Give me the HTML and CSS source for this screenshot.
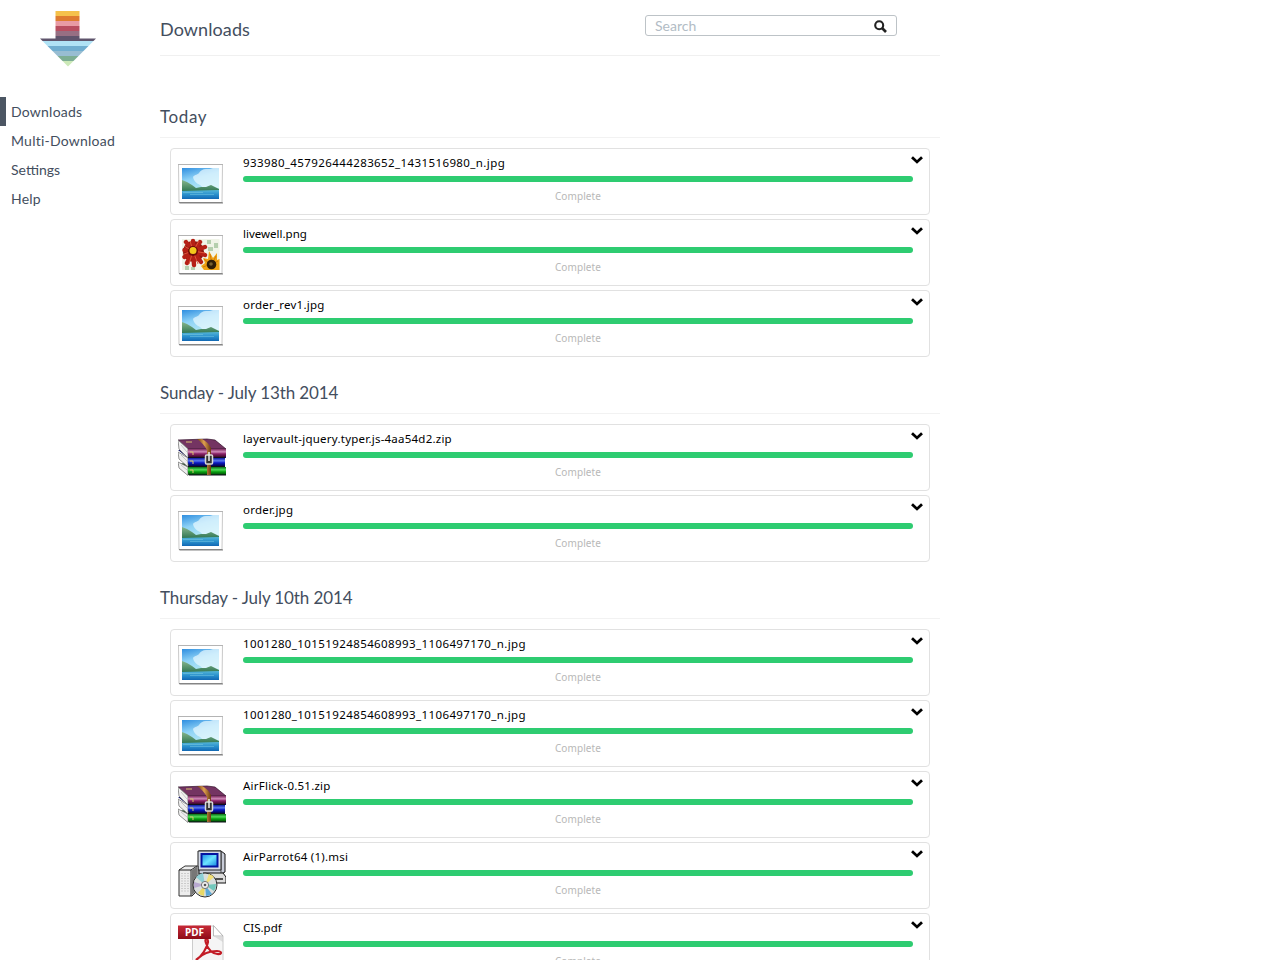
FILE: index.html
```
<!DOCTYPE html>
<html lang="en">
<head>
<meta charset="utf-8">
<title>Downloads</title>
<link rel="stylesheet" href="styles.css">
</head>
<body>
<svg class="sprites" aria-hidden="true">
  <defs>
    <linearGradient id="sky" x2=".3" y2="1"><stop offset="0" stop-color="#2f8ee0"/><stop offset=".4" stop-color="#8fd3f6"/><stop offset="1" stop-color="#c8f4f4"/></linearGradient>
    <linearGradient id="sea" x2="0" y2="1"><stop offset="0" stop-color="#55b6d8"/><stop offset=".5" stop-color="#2a90cc"/><stop offset="1" stop-color="#1268b4"/></linearGradient>
    <linearGradient id="hill" x2="0" y2="1"><stop offset="0" stop-color="#86b58c"/><stop offset="1" stop-color="#2b7350"/></linearGradient>
    <linearGradient id="plum" x2="0" y2="1"><stop offset="0" stop-color="#7d2b60"/><stop offset=".35" stop-color="#d08ab8"/><stop offset=".6" stop-color="#8b2067"/><stop offset="1" stop-color="#3c0a2a"/></linearGradient>
    <linearGradient id="blue" x2="0" y2="1"><stop offset="0" stop-color="#1018a0"/><stop offset=".35" stop-color="#5a7cf0"/><stop offset=".6" stop-color="#0a18c4"/><stop offset="1" stop-color="#04064c"/></linearGradient>
    <linearGradient id="green" x2="0" y2="1"><stop offset="0" stop-color="#087018"/><stop offset=".35" stop-color="#50dc58"/><stop offset=".6" stop-color="#08a010"/><stop offset="1" stop-color="#044008"/></linearGradient>
    <linearGradient id="strap" x2="1" y2="0"><stop offset="0" stop-color="#6b3a10"/><stop offset=".5" stop-color="#e0a050"/><stop offset="1" stop-color="#6b3a10"/></linearGradient>
    <linearGradient id="red" x2="0" y2="1"><stop offset="0" stop-color="#c82a38"/><stop offset="1" stop-color="#8e0c18"/></linearGradient>
    <linearGradient id="screen" x2="1" y2="1"><stop offset="0" stop-color="#1684e4"/><stop offset=".5" stop-color="#6ce4ff"/><stop offset="1" stop-color="#1080e0"/></linearGradient>
  </defs>
  <symbol id="frame" viewBox="0 0 48 48">
    <path d="M1.500 46h43.500v2H1.500z" fill="#9a9a9a" opacity=".6"/>
    <path d="M.5 8.500h44l-.5 38H1z" fill="#fff" stroke="#c9c9c9"/>
    <path d="M0 8.500h45" stroke="#b4b4b4"/>
    <path d="M1 46.500h43.500" stroke="#858585"/>
  </symbol>
  <symbol id="photo" viewBox="0 0 48 48">
    <use href="#frame"/>
    <path d="M4 12h37v31H4z" fill="url(#sky)"/>
    <path d="M15 21c2-3 5-2 6-4s4-4 7-4 5 0 7-1h6v20H25c-2-4-9-4-10-11z" fill="#eafaff" opacity=".7"/>
    <path d="M4 24l5 2 5 3 4 3 5-1 5 0 5-2 8 4v3H4z" fill="url(#hill)"/>
    <path d="M4 35l37-1v9H4z" fill="url(#sea)"/>
    <path d="M5 36.500h20M12 38.500h24" stroke="#8ad4e8" stroke-width=".7" opacity=".6"/>
  </symbol>
  <symbol id="flower" viewBox="0 0 48 48">
    <use href="#frame"/>
    <path d="M4 12h37.500v31H4z" fill="#f0f4e8"/>
    <path d="M29 13h4v4h-4zM36 16h4v5h-4zM30 20h5v4h-5zM7 39h4v4H7zM13 40h4v3h-4z" fill="#b5cfae"/>
    <circle cx="15.500" cy="24.500" r="10.500" fill="#8e1812"/>
    <path d="M15 24L8 15M15 24L15 14M15 24L22 15M15 24L27 20M15 24L27 28M15 24L23 35M15 24L16 38M15 24L9 36M15 24L6.500 30M15 24L6.500 23" stroke="#b52016" stroke-width="4.400" stroke-linecap="round"/>
    <path d="M15 24L12 14M15 24L21 14M15 24L27 26M15 24L20 37M15 24L11 37M15 24L6 27M15 24L6 19" stroke="#e25c40" stroke-width=".9"/>
    <circle cx="15" cy="24" r="5" fill="#6e0b08"/><circle cx="15" cy="23.500" r="3.500" fill="#f2c91c"/>
    <path d="M25 31l5 1 1-8 4 7 4-5v7l2.500-1v11H26l-3-4 4-3z" fill="#f0a414"/>
    <path d="M26 32l6 5M32 27l2 10M38 29l-4 8M25 40l8-3M40 34l-6 3" stroke="#d27c08"/>
    <circle cx="33.500" cy="37.500" r="4.800" fill="#2e1c06"/><circle cx="33" cy="37" r="1.800" fill="#766030"/>
  </symbol>
  <symbol id="archive" viewBox="0 0 48 48">
    <path d="M0 32l10 11h37v-8L38 27z" fill="#06340a"/>
    <path d="M0 30l10 5v8.500L1 36z" fill="#eee" stroke="#777" stroke-width=".8"/>
    <path d="M10 35h38v8H11q-2-4-1-8z" fill="url(#green)"/>
    <path d="M0 18l10 8h38v-2L38 16z" fill="#080c60"/>
    <path d="M0 20l10 6v9L1 27z" fill="#eee" stroke="#777" stroke-width=".8"/>
    <path d="M10 26h37v8H11q-2-4-1-8z" fill="url(#blue)"/>
    <path d="M0 8l29-1 8 1 11 9H10z" fill="#743462" stroke="#32102a" stroke-width=".7"/>
    <path d="M0 8l10 9v9L1 17z" fill="#f2f2f2" stroke="#777" stroke-width=".8"/>
    <path d="M10 17h38v8H11q-2-4-1-8z" fill="url(#plum)"/>
    <path d="M3 13l6 7M3 23l6 6M3 33l6 5" stroke="#bbb" stroke-width=".8"/>
    <path d="M10 25.500h37M10 34.500h37M11 43h37" stroke="#10101c"/>
    <path d="M12 20h3v3M12 29h3v3M12 38h3v3M8 10h6" stroke="#d9c26c" fill="none"/>
    <path d="M19 7h5q6 3 9 9v27h-4V18q-4-7-10-11z" fill="url(#strap)"/>
    <rect x="27.500" y="23" width="7" height="9" rx="1" fill="#333" stroke="#d9d9d9" stroke-width="1.500"/>
    <path d="M31 20v9" stroke="#eee" stroke-width="1.500"/>
  </symbol>
  <symbol id="installer" viewBox="0 0 48 48">
    <path d="M21 1h22l4 3v18l-4 2H21z" fill="#c8ccd8" stroke="#111"/>
    <path d="M43 1v22" stroke="#555"/>
    <path d="M20 1h23v19H20z" fill="#d6dce8" stroke="#222"/>
    <path d="M23.500 4h16v12.500h-16z" fill="url(#screen)" stroke="#0414a0" stroke-width="2"/>
    <path d="M25 23h20l3 4v6H30z" fill="#ddd" stroke="#111"/>
    <path d="M36 29h9" stroke="#222" stroke-width="1.500"/>
    <path d="M1 20l6-4h13v24l-6 6H1z" fill="#ededed" stroke="#333"/>
    <path d="M1 20h12v26M13 20l6-4" fill="none" stroke="#222"/>
    <path d="M13.500 20.500l5.500-4v24l-5.500 5z" fill="#777"/>
    <path d="M4 23v20M7 23v20M10 23v20" stroke="#aaa" stroke-dasharray="1 1.500"/>
    <circle cx="27" cy="35" r="12" fill="#d9dedd" stroke="#333"/>
    <path d="M27 35L18 27a12 12 0 0 1 7-4z" fill="#8fd0d6"/>
    <path d="M27 35L31 24a12 12 0 0 1 5 3z" fill="#f2e078"/>
    <path d="M27 35L38 34a12 12 0 0 1-2 7z" fill="#72c8bc"/>
    <path d="M27 35L26 46a12 12 0 0 1-6-3z" fill="#e8d866"/>
    <path d="M27 35L34 44a12 12 0 0 1-6 2z" fill="#5ba8d8"/>
    <path d="M27 35L16 38v-6z" fill="#b8a9d0"/>
    <circle cx="27" cy="35" r="3.600" fill="#eee" stroke="#777"/><circle cx="27" cy="35" r="1.300" fill="#555"/>
  </symbol>
  <symbol id="chevron" viewBox="0 0 14 10">
    <path d="M2 2.200l5 4.700 5-4.700" fill="none" stroke="#000" stroke-width="2.800"/>
  </symbol>
</svg>

<aside class="sidebar">
  <svg class="logo" viewBox="0 0 56 56">
    <defs><clipPath id="arrow"><path d="M15.500 0h24v27.500H56L28 55.500 0 27.500h15.500z"/></clipPath></defs>
    <g clip-path="url(#arrow)">
      <path fill="#f5c14b" d="M0 0h56v5H0z"/><path fill="#de7b2f" d="M0 5h56v5H0z"/>
      <path fill="#e89ba4" d="M0 10h56v5H0z"/><path fill="#b94e60" d="M0 15h56v5H0z"/>
      <path fill="#976f83" d="M0 20h56v5H0z"/><path fill="#5f546c" d="M0 25h56v5H0z"/>
      <path fill="#b0e2f5" d="M0 30h56v5H0z"/><path fill="#70aed0" d="M0 35h56v5H0z"/>
      <path fill="#98bdd2" d="M0 40h56v5H0z"/><path fill="#7dae94" d="M0 45h56v5H0z"/>
      <path fill="#cce9b8" d="M0 50h56v6H0z"/>
    </g>
  </svg>
  <nav class="nav">
    <a class="nav-item active">Downloads</a>
    <a class="nav-item">Multi-Download</a>
    <a class="nav-item compact">Settings</a>
    <a class="nav-item">Help</a>
  </nav>
</aside>

<main class="content">
  <header class="header">
    <h1 class="title">Downloads</h1>
    <div class="search">
      <span>Search</span>
      <svg class="search-icon" viewBox="0 0 13 13"><circle cx="5.200" cy="5.200" r="4" fill="none" stroke="#222" stroke-width="2.100"/><path d="M8 8l4 4" stroke="#222" stroke-width="2.600"/></svg>
    </div>
  </header>

  <section class="group">
    <h2 class="day day-short">Today</h2>
    <article class="card">
      <svg class="icon"><use href="#photo"/></svg>
      <div class="info"><div class="name numeric">933980_457926444283652_1431516980_n.jpg</div><div class="bar"></div><div class="status">Complete</div></div>
      <svg class="chevron"><use href="#chevron"/></svg>
    </article>
    <article class="card">
      <svg class="icon"><use href="#flower"/></svg>
      <div class="info"><div class="name compact">livewell.png</div><div class="bar"></div><div class="status">Complete</div></div>
      <svg class="chevron"><use href="#chevron"/></svg>
    </article>
    <article class="card">
      <svg class="icon"><use href="#photo"/></svg>
      <div class="info"><div class="name">order_rev1.jpg</div><div class="bar"></div><div class="status">Complete</div></div>
      <svg class="chevron"><use href="#chevron"/></svg>
    </article>
  </section>

  <section class="group">
    <h2 class="day">Sunday - July 13th 2014</h2>
    <article class="card">
      <svg class="icon"><use href="#archive"/></svg>
      <div class="info"><div class="name">layervault-jquery.typer.js-4aa54d2.zip</div><div class="bar"></div><div class="status">Complete</div></div>
      <svg class="chevron"><use href="#chevron"/></svg>
    </article>
    <article class="card">
      <svg class="icon"><use href="#photo"/></svg>
      <div class="info"><div class="name">order.jpg</div><div class="bar"></div><div class="status">Complete</div></div>
      <svg class="chevron"><use href="#chevron"/></svg>
    </article>
  </section>

  <section class="group">
    <h2 class="day">Thursday - July 10th 2014</h2>
    <article class="card">
      <svg class="icon"><use href="#photo"/></svg>
      <div class="info"><div class="name numeric">1001280_10151924854608993_1106497170_n.jpg</div><div class="bar"></div><div class="status">Complete</div></div>
      <svg class="chevron"><use href="#chevron"/></svg>
    </article>
    <article class="card">
      <svg class="icon"><use href="#photo"/></svg>
      <div class="info"><div class="name numeric">1001280_10151924854608993_1106497170_n.jpg</div><div class="bar"></div><div class="status">Complete</div></div>
      <svg class="chevron"><use href="#chevron"/></svg>
    </article>
    <article class="card">
      <svg class="icon"><use href="#archive"/></svg>
      <div class="info"><div class="name">AirFlick-0.51.zip</div><div class="bar"></div><div class="status">Complete</div></div>
      <svg class="chevron"><use href="#chevron"/></svg>
    </article>
    <article class="card">
      <svg class="icon"><use href="#installer"/></svg>
      <div class="info"><div class="name">AirParrot64 (1).msi</div><div class="bar"></div><div class="status">Complete</div></div>
      <svg class="chevron"><use href="#chevron"/></svg>
    </article>
    <article class="card">
      <svg class="icon" viewBox="0 0 48 48">
        <path d="M14.500 5h21l9.500 10v33H14.500z" fill="#f5f5f5" stroke="#ccc"/>
        <path d="M35.500 4.500v10.500H45z" fill="#fff" stroke="#aaa" stroke-width=".8"/>
        <path d="M37 16h8v5z" fill="#ccc" opacity=".6"/>
        <path d="M18 39c6-4 11-12 12-18 0-5-4-4-2 1 2 7 7 12 14 11 2-1 1-3-3-3-8 0-16 4-21 9z" fill="none" stroke="#c21c26" stroke-width="2.200"/>
        <path d="M0 4.500h33v13.500H0z" fill="url(#red)"/>
        <text x="7" y="15" class="pdf-label">PDF</text>
      </svg>
      <div class="info"><div class="name compact">CIS.pdf</div><div class="bar"></div><div class="status">Complete</div></div>
      <svg class="chevron"><use href="#chevron"/></svg>
    </article>
  </section>
</main>
</body>
</html>
```
FILE: styles.css
```
* { box-sizing: border-box; }
body {
  margin: 0;
  height: 960px;
  overflow: hidden;
  display: flex;
  align-items: flex-start;
  background: #fff;
  color: #434e5e;
  font-family: Lato, sans-serif;
}
.sprites { position: absolute; width: 0; height: 0; }

.sidebar { width: 160px; flex: none; padding-top: 11px; }
.logo { display: block; width: 56px; height: 56px; margin-left: 39.5px; }
.nav { display: flex; flex-direction: column; padding-top: 30px; }
.nav-item {
  height: 29px;
  padding-left: 5px;
  border-left: 6px solid transparent;
  font-size: 14px;
  line-height: 30px;
  letter-spacing: 0.23px;
}
.nav-item.compact { letter-spacing: 0; }
.nav-item.active { border-left-color: #4c5663; }

.content { width: 780px; flex: none; }
.header {
  display: flex;
  align-items: flex-start;
  height: 56px;
  margin-bottom: 26px;
  border-bottom: 1px solid #f0f0f0;
}
.title {
  width: 485px;
  margin: 0;
  padding-top: 17px;
  font-size: 18px;
  font-weight: 400;
  line-height: 24px;
  letter-spacing: 0.1px;
}
.search {
  display: flex;
  justify-content: space-between;
  align-items: center;
  width: 252px;
  height: 21px;
  margin-top: 15px;
  padding: 0 9px;
  border: 1px solid #bdc3c7;
  border-radius: 3px;
  color: #b2bcc5;
  font-size: 14px;
  line-height: 19px;
}
.search-icon { width: 13px; height: 13px; margin-top: 1px; }

.day {
  height: 56px;
  margin: 0 0 10px;
  padding-top: 23px;
  border-bottom: 1px solid #f2f2f2;
  font-size: 17px;
  font-weight: 400;
  line-height: 24px;
  letter-spacing: -0.11px;
}
.day-short { letter-spacing: 0.6px; }
.group { display: flex; flex-direction: column; }
.group + .group { margin-top: -3px; }
.card {
  display: flex;
  align-items: flex-start;
  height: 67px;
  margin: 0 10px 4px;
  padding: 7px 5px 0 7px;
  border: 1px solid #e1e1e1;
  border-radius: 4px;
}
.icon { width: 48px; height: 48px; flex: none; }
.info { width: 670px; margin-left: 17px; flex: none; }
.name {
  height: 20px;
  margin-top: -3px;
  color: #000;
  font-family: "Noto Sans", sans-serif;
  font-size: 11.5px;
  line-height: 20px;
  letter-spacing: 0.23px;
  white-space: nowrap;
}
.name.numeric { letter-spacing: 0.4px; }
.name.compact { letter-spacing: 0; }
.bar { height: 6px; margin-top: 3px; border-radius: 3px; background: #2ecc71; }
.status {
  margin-top: 5px;
  color: #b8b8b8;
  font-family: "Noto Sans", sans-serif;
  font-size: 10px;
  line-height: 18px;
  letter-spacing: 0.1px;
  text-align: center;
}
.chevron { width: 14px; height: 10px; margin: -1px 0 0 -3.5px; flex: none; }
.pdf-label { fill: #fff; font: bold 10px "Noto Sans", sans-serif; }
```
